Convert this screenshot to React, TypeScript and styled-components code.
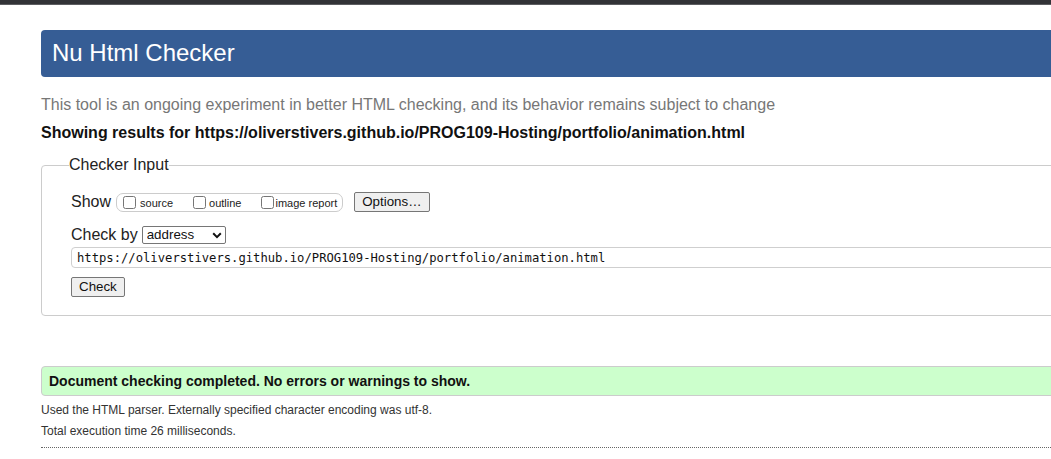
import React from "react";
import styled, { createGlobalStyle } from "styled-components";

const GlobalStyle = createGlobalStyle`
  html, body {
    margin: 0;
    padding: 0;
    background: #ffffff;
    overflow: hidden;
  }
  body {
    font-family: "Liberation Sans", Arial, sans-serif;
    color: #1a1a1a;
  }
`;

const TopBar = styled.div`
  height: 4px;
  background: #323337;
  border-bottom: 1px solid #5c5d61;
`;

const Main = styled.main`
  width: 1100px;
  padding-left: 41px;
`;

const Header = styled.h1`
  margin: 25px 0 0;
  height: 47px;
  padding: 0 0 2px 11px;
  box-sizing: border-box;
  background: #365d95;
  border-radius: 4px;
  color: #ffffff;
  font-size: 24px;
  font-weight: normal;
  line-height: 45px;
`;

const Lede = styled.p`
  margin: 19px 0 0;
  font-size: 16px;
  line-height: 18px;
  color: #777777;
`;

const ResultsFor = styled.p`
  margin: 10px 0 0;
  font-size: 16px;
  line-height: 18px;
  font-weight: bold;
  color: #111111;
`;

const InputFieldset = styled.fieldset`
  margin: 14px 0 0;
  padding: 18px 0 18px 27px;
  border: 1px solid #cccccc;
  border-radius: 4px;
  min-width: 0;
`;

const Legend = styled.legend`
  padding: 0;
  font-size: 16px;
  line-height: 18px;
  color: #222222;
`;

const Content = styled.div`
  padding-left: 2px;
  display: flex;
  flex-direction: column;
`;

const Row = styled.div<{ $h: number; $mt?: number }>`
  display: flex;
  align-items: center;
  height: ${(p) => p.$h}px;
  margin-top: ${(p) => p.$mt ?? 0}px;
`;

const RowLabel = styled.span`
  font-size: 16px;
  line-height: 18px;
  color: #222222;
  margin-right: 4px;
`;

const OptionGroup = styled.div`
  display: flex;
  align-items: center;
  height: 19px;
  box-sizing: border-box;
  border: 1px solid #cccccc;
  border-radius: 7px;
  padding: 0 5px 0 6px;
  gap: 20px;
  margin-left: 1px;
`;

const CheckLabel = styled.label<{ $gap: number }>`
  display: flex;
  align-items: center;
  gap: ${(p) => p.$gap}px;
  font-size: 11px;
  line-height: 13px;
  color: #222222;
  padding-top: 2px;
`;

const Box = styled.input.attrs({ type: "checkbox" })`
  appearance: none;
  margin: 0;
  width: 13px;
  height: 13px;
  box-sizing: border-box;
  border: 1px solid #767676;
  border-radius: 2.5px;
  background: #ffffff;
  position: relative;
  top: -1px;
`;

const Button = styled.button<{ $ml?: number }>`
  height: 20px;
  box-sizing: border-box;
  padding: 0 7px;
  margin-left: ${(p) => p.$ml ?? 0}px;
  background: #efefef;
  border: 1px solid #767676;
  border-radius: 2px;
  font-family: "Liberation Sans", Arial, sans-serif;
  font-size: 13.33px;
  line-height: 16px;
  color: #111111;
`;

const SelectWrap = styled.div`
  position: relative;
  display: inline-flex;
`;

const Select = styled.select`
  appearance: none;
  width: 84px;
  height: 18px;
  box-sizing: border-box;
  margin: 0;
  padding: 0 0 0 4px;
  border: 1px solid #767676;
  border-radius: 2px;
  background: #ffffff;
  font-family: "Liberation Sans", Arial, sans-serif;
  font-size: 13.33px;
  line-height: 16px;
  color: #111111;
`;

const Chevron = styled.svg`
  position: absolute;
  right: 4px;
  top: 6px;
  pointer-events: none;
`;

const UrlInput = styled.input`
  width: 100%;
  height: 21px;
  box-sizing: border-box;
  margin: 0;
  padding: 0 0 0 5px;
  border: 1px solid #cfcfcf;
  border-radius: 4px;
  font-family: "DejaVu Sans Mono", "Liberation Mono", monospace;
  font-size: 12.2px;
  color: #111111;
  background: #ffffff;
`;

const Success = styled.p`
  margin: 50px 0 0;
  padding: 6px 7px 6px;
  background: #ccffcc;
  border: 1px solid #cccccc;
  border-radius: 4px;
  font-size: 14px;
  line-height: 16px;
  font-weight: bold;
  color: #111111;
`;

const Details = styled.p`
  margin: 7px 0 0;
  font-size: 12px;
  line-height: 14px;
  color: #333333;
`;

const Divider = styled.hr`
  margin: 9px 0 0;
  border: 0;
  border-top: 1px dotted #666666;
  height: 0;
`;

export default function App() {
  const url =
    "https://oliverstivers.github.io/PROG109-Hosting/portfolio/animation.html";
  return (
    <>
      <GlobalStyle />
      <TopBar />
      <Main>
        <Header>Nu Html Checker</Header>
        <Lede>
          This tool is an ongoing experiment in better HTML checking, and its
          behavior remains subject to change
        </Lede>
        <ResultsFor>Showing results for {url}</ResultsFor>
        <InputFieldset>
          <Legend>Checker Input</Legend>
          <Content>
            <Row $h={20}>
              <RowLabel>Show</RowLabel>
              <OptionGroup>
                <CheckLabel $gap={4}>
                  <Box />
                  source
                </CheckLabel>
                <CheckLabel $gap={3}>
                  <Box />
                  outline
                </CheckLabel>
                <CheckLabel $gap={1}>
                  <Box />
                  image report
                </CheckLabel>
              </OptionGroup>
              <Button $ml={11}>Options…</Button>
            </Row>
            <Row $h={19} $mt={13}>
              <RowLabel>Check by</RowLabel>
              <SelectWrap>
                <Select defaultValue="address">
                  <option value="address">address</option>
                  <option value="file">file upload</option>
                  <option value="text">text input</option>
                </Select>
                <Chevron width="10" height="7" viewBox="0 0 10 7">
                  <path
                    d="M1.2 1.3 L5 5.1 L8.8 1.3"
                    fill="none"
                    stroke="#111"
                    strokeWidth="2"
                  />
                </Chevron>
              </SelectWrap>
            </Row>
            <Row $h={21} $mt={3}>
              <UrlInput defaultValue={url} />
            </Row>
            <Row $h={20} $mt={9}>
              <Button>Check</Button>
            </Row>
          </Content>
        </InputFieldset>
        <Success>Document checking completed. No errors or warnings to show.</Success>
        <Details>
          Used the HTML parser. Externally specified character encoding was
          utf-8.
        </Details>
        <Details>Total execution time 26 milliseconds.</Details>
        <Divider />
      </Main>
    </>
  );
}
